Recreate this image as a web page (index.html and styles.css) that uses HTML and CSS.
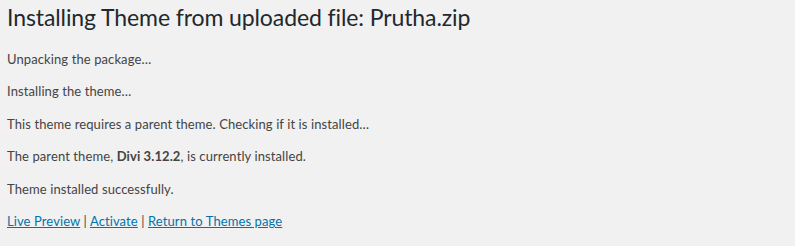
FILE: index.html
```html
<!DOCTYPE html>
<html>
<head>
<meta charset="utf-8">
<link rel="stylesheet" href="styles.css">
</head>
<body>
<div class="wrap">
  <h1 class="title">Installing Theme from uploaded file: Prutha.zip</h1>
  <p class="msg">Unpacking the package…</p>
  <p class="msg">Installing the theme…</p>
  <p class="msg">This theme requires a parent theme. Checking if it is installed…</p>
  <p class="msg">The parent theme, <strong>Divi 3.12.2</strong>, is currently installed.</p>
  <p class="msg">Theme installed successfully.</p>
  <p class="msg actions"><a href="#">Live Preview</a> | <a href="#">Activate</a> | <a href="#">Return to Themes page</a></p>
</div>
</body>
</html>
```

FILE: styles.css
```css
html, body {
  margin: 0;
  padding: 0;
  background: #f1f1f1;
}
body {
  font-family: "Lato", "Noto Sans", sans-serif;
  font-size: 13px;
  color: #444;
}
.wrap {
  padding: 0 0 0 7px;
}
.title {
  margin: 0;
  padding: 3px 0 4px;
  font-size: 23px;
  font-weight: 400;
  line-height: 1.3;
  letter-spacing: -0.1px;
  color: #23282d;
}
.msg {
  margin: 13px 0;
  line-height: 1.5;
  letter-spacing: 0.1px;
}
.msg strong {
  font-weight: 700;
}
.actions a {
  color: #0073aa;
  text-decoration: underline;
}
```
